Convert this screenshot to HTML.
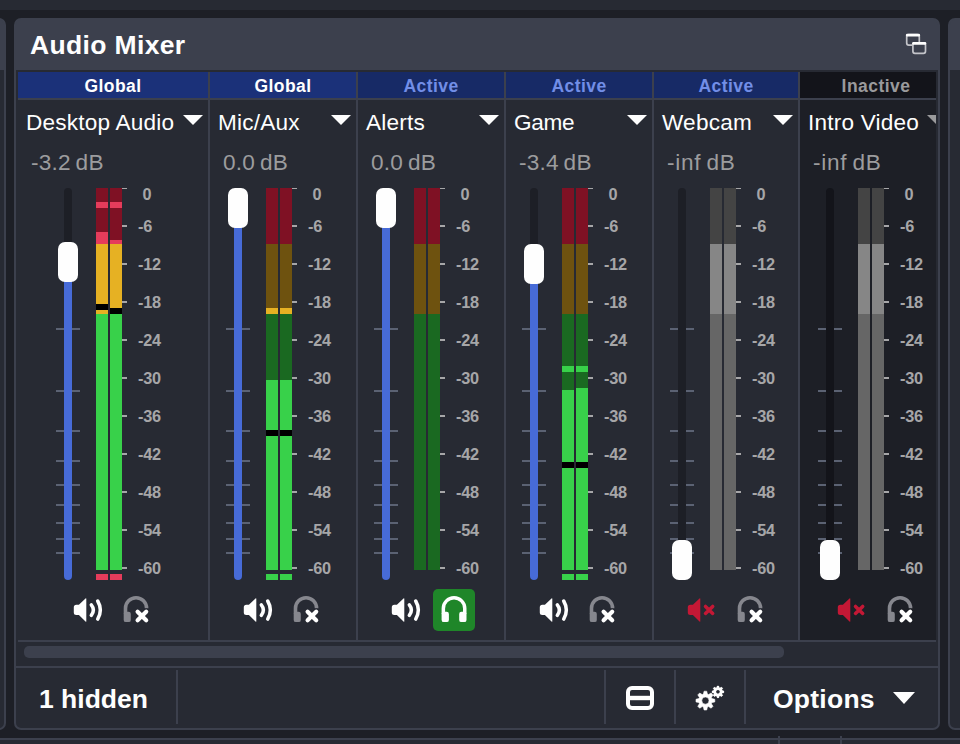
<!DOCTYPE html>
<html lang="en"><head><meta charset="utf-8"><title>Audio Mixer</title>
<style>
html,body{margin:0;padding:0}
body{width:960px;height:744px;overflow:hidden;background:#1d1f26;position:relative;font-family:"Liberation Sans",sans-serif;color:#fefefe}
.a{position:absolute}
.panel{position:absolute;box-sizing:border-box;border:2px solid #3c404d;border-radius:7px;background:linear-gradient(#3c404d 0,#3c404d 50px,#272a33 50px);overflow:hidden}
.tbar{position:absolute;left:0;top:0;right:0;height:50px;background:#3c404d}
.title{position:absolute;left:30px;top:28.75px;font-weight:bold;font-size:26.5px;line-height:32px;letter-spacing:.35px;white-space:nowrap}
.col{position:absolute;top:72px;height:568px;background:#272a33;overflow:hidden}
.col.in{background:#1d1f26}
.hd{position:absolute;left:0;right:0;top:0;height:26px;text-align:center;font-weight:bold;font-size:17.5px;line-height:28px;letter-spacing:.45px;overflow:hidden}
.hd.g{background:#1b3179;color:#fefefe}
.hd.ac{background:#172a66;color:#728eE7}
.hd.in{background:#13141a;color:#9a9a9c}
.hl{position:absolute;left:0;right:0;top:26px;height:2px;background:#3c404d}
.sep{position:absolute;top:72px;height:568px;width:2px;background:#3c404d}
.nm{position:absolute;left:8px;top:36.75px;font-size:22.6px;line-height:28px;white-space:nowrap;letter-spacing:.2px}
.db{position:absolute;left:13px;top:76.75px;font-size:22.6px;line-height:28px;white-space:nowrap;color:#9c9c9e;word-spacing:-1.6px;letter-spacing:.2px}
.tri{position:absolute;width:0;height:0;border-left:10.6px solid transparent;border-right:10.6px solid transparent;border-top:10.5px solid #fefefe}
.gr{position:absolute;top:116px;width:8px;height:392px;border-radius:4px;background:#1d1f26}
.in .gr{background:#13141a}
.fill{position:absolute;width:8px;border-radius:0 0 4px 4px;background:#476bd7}
.hn{position:absolute;width:20px;height:40px;border-radius:7px;background:#fefefe}
.st{position:absolute;width:24px;height:2px;background:#5b6273}
.m{position:absolute;width:12px}
.tk{position:absolute;width:5px;height:2px;background:#a6a6a8}
.lb{position:absolute;font-weight:bold;font-size:16.3px;letter-spacing:-.25px;line-height:20px;color:#a6a6a8;white-space:nowrap}
.hline{position:absolute;height:2px;background:#3c404d}
.vsep{position:absolute;top:670px;width:2px;height:54px;background:#3c404d}
.tb{position:absolute;font-weight:bold;font-size:26.5px;line-height:32px;white-space:nowrap}
.mon{position:absolute;width:42px;height:42px;border-radius:5px;background:#1f8629}
svg{position:absolute;overflow:visible}
</style></head>
<body>
<div class="a" style="left:0;top:0;width:960px;height:10px;background:#272a33"></div>
<div class="a" style="left:0;top:738px;width:960px;height:6px;background:#272a33;border-top:2px solid #3c404d;box-sizing:border-box"></div>
<div class="a" style="left:778px;top:736px;width:2px;height:8px;background:#3c404d"></div>
<div class="a" style="left:840px;top:736px;width:2px;height:8px;background:#3c404d"></div>
<div class="panel" style="left:-30px;top:18px;width:36px;height:712px"></div>
<div class="panel" style="left:948px;top:18px;width:40px;height:712px"></div>
<div class="panel" style="left:14px;top:18px;width:926px;height:712px"></div>
<div class="title">Audio Mixer</div>
<svg style="left:904px;top:32px" width="24" height="24" viewBox="0 0 24 24">
<rect x="2.7" y="2.7" width="12.6" height="10.4" rx="2" fill="none" stroke="#c3c4c9" stroke-width="1.7"/>
<rect x="1.9" y="1.8" width="14.2" height="2.8" rx="1.3" fill="#fefefe"/>
<rect x="8.9" y="10.9" width="12.6" height="10.4" rx="2" fill="#3c404d" stroke="#c3c4c9" stroke-width="1.7"/>
<rect x="8.1" y="10" width="14.2" height="2.8" rx="1.3" fill="#fefefe"/>
</svg>
<div class="col" style="left:18px;width:190px">
<div class="hd g">Global</div><div class="hl"></div>
<div class="nm">Desktop Audio</div>
<div class="tri" style="left:165.4px;top:42.8px"></div>
<div class="db">-3.2 dB</div>
<div class="gr" style="left:46px"></div>
<div class="st" style="left:38px;top:256px"></div>
<div class="st" style="left:38px;top:318px"></div>
<div class="st" style="left:38px;top:358px"></div>
<div class="st" style="left:38px;top:388px"></div>
<div class="st" style="left:38px;top:412px"></div>
<div class="st" style="left:38px;top:432px"></div>
<div class="st" style="left:38px;top:450px"></div>
<div class="st" style="left:38px;top:466px"></div>
<div class="st" style="left:38px;top:480px"></div>
<div class="a" style="left:46px;top:120px;width:8px;height:384px;background:#1d1f26"></div>
<div class="fill" style="left:46px;top:190px;height:318px"></div>
<div class="hn" style="left:40px;top:170px"></div>
<div class="m" style="left:78px;top:116px;height:56px;background:#7f1124"></div><div class="m" style="left:78px;top:172px;height:70px;background:#6e520f"></div><div class="m" style="left:78px;top:242px;height:256px;background:#1a6921"></div><div class="m" style="left:78px;top:242px;height:256px;background:#38d14a"></div>
<div class="m" style="left:92px;top:116px;height:56px;background:#7f1124"></div><div class="m" style="left:92px;top:172px;height:70px;background:#6e520f"></div><div class="m" style="left:92px;top:242px;height:256px;background:#1a6921"></div><div class="m" style="left:92px;top:242px;height:256px;background:#38d14a"></div>
<div class="m" style="left:78px;top:172px;height:70px;background:#e6b123"></div>
<div class="m" style="left:92px;top:172px;height:70px;background:#e6b123"></div>
<div class="m" style="left:78px;top:130px;height:6px;background:#e53c5b"></div>
<div class="m" style="left:92px;top:130px;height:6px;background:#e53c5b"></div>
<div class="m" style="left:78px;top:160px;height:12px;background:#e53c5b"></div>
<div class="m" style="left:92px;top:168px;height:4px;background:#e53c5b"></div>
<div class="m" style="left:78px;top:232px;height:6px;background:#000"></div>
<div class="m" style="left:92px;top:236px;height:6px;background:#000"></div>
<div class="m" style="left:78px;top:502px;height:6px;background:#e53c5b"></div>
<div class="m" style="left:92px;top:502px;height:6px;background:#e53c5b"></div>
<div class="tk" style="left:104px;top:116px;height:1.4px"></div>
<div class="lb" style="left:124.5px;top:112px">0</div>
<div class="tk" style="left:104px;top:153px"></div>
<div class="lb" style="left:120px;top:144px">-6</div>
<div class="tk" style="left:104px;top:191px"></div>
<div class="lb" style="left:120px;top:182px">-12</div>
<div class="tk" style="left:104px;top:229px"></div>
<div class="lb" style="left:120px;top:220px">-18</div>
<div class="tk" style="left:104px;top:267px"></div>
<div class="lb" style="left:120px;top:258px">-24</div>
<div class="tk" style="left:104px;top:305px"></div>
<div class="lb" style="left:120px;top:296px">-30</div>
<div class="tk" style="left:104px;top:343px"></div>
<div class="lb" style="left:120px;top:334px">-36</div>
<div class="tk" style="left:104px;top:381px"></div>
<div class="lb" style="left:120px;top:372px">-42</div>
<div class="tk" style="left:104px;top:419px"></div>
<div class="lb" style="left:120px;top:410px">-48</div>
<div class="tk" style="left:104px;top:457px"></div>
<div class="lb" style="left:120px;top:448px">-54</div>
<div class="tk" style="left:104px;top:495px"></div>
<div class="lb" style="left:120px;top:486px">-60</div>
<svg style="left:56px;top:526px" width="29" height="24" viewBox="0 0 29 24"><path d="M-0.2 9.2Q-0.2 6.7 2.3 6.7H4.9L11.5 0.4Q12.3 -0.3 12.3 0.8V23.2Q12.3 24.3 11.5 23.6L4.9 17.1H2.3Q-0.2 17.1 -0.2 14.6Z" fill="#fefefe"/><path d="M17.3 6.8Q21.5 12 17.3 17.3M23.7 3Q29 12 23.7 21.1" stroke="#fefefe" stroke-width="3.5" stroke-linecap="round" fill="none"/></svg>
<svg style="left:106px;top:524px" width="26" height="27" viewBox="0 0 26 27"><path d="M1.5 18V12.25A10.55 10.55 0 0 1 22.6 12.25" stroke="#86878e" stroke-width="3.6" fill="none"/><rect x="-0.3" y="15.8" width="7.1" height="10.3" rx="2.2" fill="#86878e"/><path d="M13.6 15.8l8.6 8.4M22.2 15.8l-8.6 8.4" stroke="#272a33" stroke-width="6.2" stroke-linecap="round" fill="none"/><path d="M13.6 15.8l8.6 8.4M22.2 15.8l-8.6 8.4" stroke="#fefefe" stroke-width="4.2" stroke-linecap="round" fill="none"/></svg>
</div>
<div class="col" style="left:210px;width:146px">
<div class="hd g">Global</div><div class="hl"></div>
<div class="nm">Mic/Aux</div>
<div class="tri" style="left:121.4px;top:42.8px"></div>
<div class="db">0.0 dB</div>
<div class="gr" style="left:24px"></div>
<div class="st" style="left:16px;top:256px"></div>
<div class="st" style="left:16px;top:318px"></div>
<div class="st" style="left:16px;top:358px"></div>
<div class="st" style="left:16px;top:388px"></div>
<div class="st" style="left:16px;top:412px"></div>
<div class="st" style="left:16px;top:432px"></div>
<div class="st" style="left:16px;top:450px"></div>
<div class="st" style="left:16px;top:466px"></div>
<div class="st" style="left:16px;top:480px"></div>
<div class="a" style="left:24px;top:120px;width:8px;height:384px;background:#1d1f26"></div>
<div class="fill" style="left:24px;top:136px;height:372px"></div>
<div class="hn" style="left:18px;top:116px"></div>
<div class="m" style="left:56px;top:116px;height:56px;background:#7f1124"></div><div class="m" style="left:56px;top:172px;height:70px;background:#6e520f"></div><div class="m" style="left:56px;top:242px;height:256px;background:#1a6921"></div><div class="m" style="left:56px;top:308px;height:190px;background:#38d14a"></div>
<div class="m" style="left:70px;top:116px;height:56px;background:#7f1124"></div><div class="m" style="left:70px;top:172px;height:70px;background:#6e520f"></div><div class="m" style="left:70px;top:242px;height:256px;background:#1a6921"></div><div class="m" style="left:70px;top:308px;height:190px;background:#38d14a"></div>
<div class="m" style="left:56px;top:236px;height:6px;background:#e6b123"></div>
<div class="m" style="left:70px;top:236px;height:6px;background:#e6b123"></div>
<div class="m" style="left:56px;top:358px;height:6px;background:#000"></div>
<div class="m" style="left:70px;top:358px;height:6px;background:#000"></div>
<div class="m" style="left:56px;top:502px;height:6px;background:#38d14a"></div>
<div class="m" style="left:70px;top:502px;height:6px;background:#38d14a"></div>
<div class="tk" style="left:82px;top:116px;height:1.4px"></div>
<div class="lb" style="left:102.5px;top:112px">0</div>
<div class="tk" style="left:82px;top:153px"></div>
<div class="lb" style="left:98px;top:144px">-6</div>
<div class="tk" style="left:82px;top:191px"></div>
<div class="lb" style="left:98px;top:182px">-12</div>
<div class="tk" style="left:82px;top:229px"></div>
<div class="lb" style="left:98px;top:220px">-18</div>
<div class="tk" style="left:82px;top:267px"></div>
<div class="lb" style="left:98px;top:258px">-24</div>
<div class="tk" style="left:82px;top:305px"></div>
<div class="lb" style="left:98px;top:296px">-30</div>
<div class="tk" style="left:82px;top:343px"></div>
<div class="lb" style="left:98px;top:334px">-36</div>
<div class="tk" style="left:82px;top:381px"></div>
<div class="lb" style="left:98px;top:372px">-42</div>
<div class="tk" style="left:82px;top:419px"></div>
<div class="lb" style="left:98px;top:410px">-48</div>
<div class="tk" style="left:82px;top:457px"></div>
<div class="lb" style="left:98px;top:448px">-54</div>
<div class="tk" style="left:82px;top:495px"></div>
<div class="lb" style="left:98px;top:486px">-60</div>
<svg style="left:34px;top:526px" width="29" height="24" viewBox="0 0 29 24"><path d="M-0.2 9.2Q-0.2 6.7 2.3 6.7H4.9L11.5 0.4Q12.3 -0.3 12.3 0.8V23.2Q12.3 24.3 11.5 23.6L4.9 17.1H2.3Q-0.2 17.1 -0.2 14.6Z" fill="#fefefe"/><path d="M17.3 6.8Q21.5 12 17.3 17.3M23.7 3Q29 12 23.7 21.1" stroke="#fefefe" stroke-width="3.5" stroke-linecap="round" fill="none"/></svg>
<svg style="left:84px;top:524px" width="26" height="27" viewBox="0 0 26 27"><path d="M1.5 18V12.25A10.55 10.55 0 0 1 22.6 12.25" stroke="#86878e" stroke-width="3.6" fill="none"/><rect x="-0.3" y="15.8" width="7.1" height="10.3" rx="2.2" fill="#86878e"/><path d="M13.6 15.8l8.6 8.4M22.2 15.8l-8.6 8.4" stroke="#272a33" stroke-width="6.2" stroke-linecap="round" fill="none"/><path d="M13.6 15.8l8.6 8.4M22.2 15.8l-8.6 8.4" stroke="#fefefe" stroke-width="4.2" stroke-linecap="round" fill="none"/></svg>
</div>
<div class="col" style="left:358px;width:146px">
<div class="hd ac">Active</div><div class="hl"></div>
<div class="nm">Alerts</div>
<div class="tri" style="left:121.4px;top:42.8px"></div>
<div class="db">0.0 dB</div>
<div class="gr" style="left:24px"></div>
<div class="st" style="left:16px;top:256px"></div>
<div class="st" style="left:16px;top:318px"></div>
<div class="st" style="left:16px;top:358px"></div>
<div class="st" style="left:16px;top:388px"></div>
<div class="st" style="left:16px;top:412px"></div>
<div class="st" style="left:16px;top:432px"></div>
<div class="st" style="left:16px;top:450px"></div>
<div class="st" style="left:16px;top:466px"></div>
<div class="st" style="left:16px;top:480px"></div>
<div class="a" style="left:24px;top:120px;width:8px;height:384px;background:#1d1f26"></div>
<div class="fill" style="left:24px;top:136px;height:372px"></div>
<div class="hn" style="left:18px;top:116px"></div>
<div class="m" style="left:56px;top:116px;height:56px;background:#7f1124"></div><div class="m" style="left:56px;top:172px;height:70px;background:#6e520f"></div><div class="m" style="left:56px;top:242px;height:256px;background:#1a6921"></div>
<div class="m" style="left:70px;top:116px;height:56px;background:#7f1124"></div><div class="m" style="left:70px;top:172px;height:70px;background:#6e520f"></div><div class="m" style="left:70px;top:242px;height:256px;background:#1a6921"></div>
<div class="tk" style="left:82px;top:116px;height:1.4px"></div>
<div class="lb" style="left:102.5px;top:112px">0</div>
<div class="tk" style="left:82px;top:153px"></div>
<div class="lb" style="left:98px;top:144px">-6</div>
<div class="tk" style="left:82px;top:191px"></div>
<div class="lb" style="left:98px;top:182px">-12</div>
<div class="tk" style="left:82px;top:229px"></div>
<div class="lb" style="left:98px;top:220px">-18</div>
<div class="tk" style="left:82px;top:267px"></div>
<div class="lb" style="left:98px;top:258px">-24</div>
<div class="tk" style="left:82px;top:305px"></div>
<div class="lb" style="left:98px;top:296px">-30</div>
<div class="tk" style="left:82px;top:343px"></div>
<div class="lb" style="left:98px;top:334px">-36</div>
<div class="tk" style="left:82px;top:381px"></div>
<div class="lb" style="left:98px;top:372px">-42</div>
<div class="tk" style="left:82px;top:419px"></div>
<div class="lb" style="left:98px;top:410px">-48</div>
<div class="tk" style="left:82px;top:457px"></div>
<div class="lb" style="left:98px;top:448px">-54</div>
<div class="tk" style="left:82px;top:495px"></div>
<div class="lb" style="left:98px;top:486px">-60</div>
<svg style="left:34px;top:526px" width="29" height="24" viewBox="0 0 29 24"><path d="M-0.2 9.2Q-0.2 6.7 2.3 6.7H4.9L11.5 0.4Q12.3 -0.3 12.3 0.8V23.2Q12.3 24.3 11.5 23.6L4.9 17.1H2.3Q-0.2 17.1 -0.2 14.6Z" fill="#fefefe"/><path d="M17.3 6.8Q21.5 12 17.3 17.3M23.7 3Q29 12 23.7 21.1" stroke="#fefefe" stroke-width="3.5" stroke-linecap="round" fill="none"/></svg>
<div class="mon" style="left:75px;top:517px"></div>
<svg style="left:84px;top:524px" width="25" height="27" viewBox="0 0 25 27"><path d="M1.35 18V12.45A10.7 10.7 0 0 1 22.75 12.45V18" stroke="#fefefe" stroke-width="3.5" fill="none"/><rect x="-0.4" y="15.8" width="7.3" height="10.3" rx="2.2" fill="#fefefe"/><rect x="17.2" y="15.8" width="7.3" height="10.3" rx="2.2" fill="#fefefe"/></svg>
</div>
<div class="col" style="left:506px;width:146px">
<div class="hd ac">Active</div><div class="hl"></div>
<div class="nm" style="letter-spacing:-.3px">Game</div>
<div class="tri" style="left:121.4px;top:42.8px"></div>
<div class="db">-3.4 dB</div>
<div class="gr" style="left:24px"></div>
<div class="st" style="left:16px;top:256px"></div>
<div class="st" style="left:16px;top:318px"></div>
<div class="st" style="left:16px;top:358px"></div>
<div class="st" style="left:16px;top:388px"></div>
<div class="st" style="left:16px;top:412px"></div>
<div class="st" style="left:16px;top:432px"></div>
<div class="st" style="left:16px;top:450px"></div>
<div class="st" style="left:16px;top:466px"></div>
<div class="st" style="left:16px;top:480px"></div>
<div class="a" style="left:24px;top:120px;width:8px;height:384px;background:#1d1f26"></div>
<div class="fill" style="left:24px;top:192px;height:316px"></div>
<div class="hn" style="left:18px;top:172px"></div>
<div class="m" style="left:56px;top:116px;height:56px;background:#7f1124"></div><div class="m" style="left:56px;top:172px;height:70px;background:#6e520f"></div><div class="m" style="left:56px;top:242px;height:256px;background:#1a6921"></div><div class="m" style="left:56px;top:318px;height:180px;background:#38d14a"></div>
<div class="m" style="left:70px;top:116px;height:56px;background:#7f1124"></div><div class="m" style="left:70px;top:172px;height:70px;background:#6e520f"></div><div class="m" style="left:70px;top:242px;height:256px;background:#1a6921"></div><div class="m" style="left:70px;top:316px;height:182px;background:#38d14a"></div>
<div class="m" style="left:56px;top:294px;height:6px;background:#38d14a"></div>
<div class="m" style="left:70px;top:294px;height:6px;background:#38d14a"></div>
<div class="m" style="left:56px;top:390px;height:6px;background:#000"></div>
<div class="m" style="left:70px;top:390px;height:6px;background:#000"></div>
<div class="m" style="left:56px;top:502px;height:6px;background:#38d14a"></div>
<div class="m" style="left:70px;top:502px;height:6px;background:#38d14a"></div>
<div class="tk" style="left:82px;top:116px;height:1.4px"></div>
<div class="lb" style="left:102.5px;top:112px">0</div>
<div class="tk" style="left:82px;top:153px"></div>
<div class="lb" style="left:98px;top:144px">-6</div>
<div class="tk" style="left:82px;top:191px"></div>
<div class="lb" style="left:98px;top:182px">-12</div>
<div class="tk" style="left:82px;top:229px"></div>
<div class="lb" style="left:98px;top:220px">-18</div>
<div class="tk" style="left:82px;top:267px"></div>
<div class="lb" style="left:98px;top:258px">-24</div>
<div class="tk" style="left:82px;top:305px"></div>
<div class="lb" style="left:98px;top:296px">-30</div>
<div class="tk" style="left:82px;top:343px"></div>
<div class="lb" style="left:98px;top:334px">-36</div>
<div class="tk" style="left:82px;top:381px"></div>
<div class="lb" style="left:98px;top:372px">-42</div>
<div class="tk" style="left:82px;top:419px"></div>
<div class="lb" style="left:98px;top:410px">-48</div>
<div class="tk" style="left:82px;top:457px"></div>
<div class="lb" style="left:98px;top:448px">-54</div>
<div class="tk" style="left:82px;top:495px"></div>
<div class="lb" style="left:98px;top:486px">-60</div>
<svg style="left:34px;top:526px" width="29" height="24" viewBox="0 0 29 24"><path d="M-0.2 9.2Q-0.2 6.7 2.3 6.7H4.9L11.5 0.4Q12.3 -0.3 12.3 0.8V23.2Q12.3 24.3 11.5 23.6L4.9 17.1H2.3Q-0.2 17.1 -0.2 14.6Z" fill="#fefefe"/><path d="M17.3 6.8Q21.5 12 17.3 17.3M23.7 3Q29 12 23.7 21.1" stroke="#fefefe" stroke-width="3.5" stroke-linecap="round" fill="none"/></svg>
<svg style="left:84px;top:524px" width="26" height="27" viewBox="0 0 26 27"><path d="M1.5 18V12.25A10.55 10.55 0 0 1 22.6 12.25" stroke="#86878e" stroke-width="3.6" fill="none"/><rect x="-0.3" y="15.8" width="7.1" height="10.3" rx="2.2" fill="#86878e"/><path d="M13.6 15.8l8.6 8.4M22.2 15.8l-8.6 8.4" stroke="#272a33" stroke-width="6.2" stroke-linecap="round" fill="none"/><path d="M13.6 15.8l8.6 8.4M22.2 15.8l-8.6 8.4" stroke="#fefefe" stroke-width="4.2" stroke-linecap="round" fill="none"/></svg>
</div>
<div class="col" style="left:654px;width:144px">
<div class="hd ac">Active</div><div class="hl"></div>
<div class="nm">Webcam</div>
<div class="tri" style="left:119.4px;top:42.8px"></div>
<div class="db" style="letter-spacing:.7px">-inf dB</div>
<div class="gr" style="left:24px"></div>
<div class="st" style="left:16px;top:256px"></div>
<div class="st" style="left:16px;top:318px"></div>
<div class="st" style="left:16px;top:358px"></div>
<div class="st" style="left:16px;top:388px"></div>
<div class="st" style="left:16px;top:412px"></div>
<div class="st" style="left:16px;top:432px"></div>
<div class="st" style="left:16px;top:450px"></div>
<div class="st" style="left:16px;top:466px"></div>
<div class="st" style="left:16px;top:480px"></div>
<div class="a" style="left:24px;top:120px;width:8px;height:384px;background:#1d1f26"></div>
<div class="hn" style="left:18px;top:468px"></div>
<div class="m" style="left:56px;top:116px;height:56px;background:#444444"></div><div class="m" style="left:56px;top:172px;height:70px;background:#868686"></div><div class="m" style="left:56px;top:242px;height:256px;background:#666666"></div>
<div class="m" style="left:70px;top:116px;height:56px;background:#444444"></div><div class="m" style="left:70px;top:172px;height:70px;background:#868686"></div><div class="m" style="left:70px;top:242px;height:256px;background:#666666"></div>
<div class="tk" style="left:82px;top:116px;height:1.4px"></div>
<div class="lb" style="left:102.5px;top:112px">0</div>
<div class="tk" style="left:82px;top:153px"></div>
<div class="lb" style="left:98px;top:144px">-6</div>
<div class="tk" style="left:82px;top:191px"></div>
<div class="lb" style="left:98px;top:182px">-12</div>
<div class="tk" style="left:82px;top:229px"></div>
<div class="lb" style="left:98px;top:220px">-18</div>
<div class="tk" style="left:82px;top:267px"></div>
<div class="lb" style="left:98px;top:258px">-24</div>
<div class="tk" style="left:82px;top:305px"></div>
<div class="lb" style="left:98px;top:296px">-30</div>
<div class="tk" style="left:82px;top:343px"></div>
<div class="lb" style="left:98px;top:334px">-36</div>
<div class="tk" style="left:82px;top:381px"></div>
<div class="lb" style="left:98px;top:372px">-42</div>
<div class="tk" style="left:82px;top:419px"></div>
<div class="lb" style="left:98px;top:410px">-48</div>
<div class="tk" style="left:82px;top:457px"></div>
<div class="lb" style="left:98px;top:448px">-54</div>
<div class="tk" style="left:82px;top:495px"></div>
<div class="lb" style="left:98px;top:486px">-60</div>
<svg style="left:34px;top:526px" width="29" height="24" viewBox="0 0 29 24"><path d="M-0.2 9.2Q-0.2 6.7 2.3 6.7H4.9L11.5 0.4Q12.3 -0.3 12.3 0.8V23.2Q12.3 24.3 11.5 23.6L4.9 17.1H2.3Q-0.2 17.1 -0.2 14.6Z" fill="#c41835"/><path d="M17.5 8.4l7.2 7M24.7 8.4l-7.2 7" stroke="#c41835" stroke-width="3.5" stroke-linecap="round" fill="none"/></svg>
<svg style="left:84px;top:524px" width="26" height="27" viewBox="0 0 26 27"><path d="M1.5 18V12.25A10.55 10.55 0 0 1 22.6 12.25" stroke="#86878e" stroke-width="3.6" fill="none"/><rect x="-0.3" y="15.8" width="7.1" height="10.3" rx="2.2" fill="#86878e"/><path d="M13.6 15.8l8.6 8.4M22.2 15.8l-8.6 8.4" stroke="#272a33" stroke-width="6.2" stroke-linecap="round" fill="none"/><path d="M13.6 15.8l8.6 8.4M22.2 15.8l-8.6 8.4" stroke="#fefefe" stroke-width="4.2" stroke-linecap="round" fill="none"/></svg>
</div>
<div class="col in" style="left:800px;width:136px">
<div class="hd in" style="right:auto;width:152px">Inactive</div><div class="hl"></div>
<div class="nm">Intro Video</div>
<div class="tri" style="left:127.4px;top:42.8px;border-top-color:#9a9a9c"></div>
<div class="db" style="letter-spacing:.7px">-inf dB</div>
<div class="gr" style="left:26px"></div>
<div class="st" style="left:18px;top:256px"></div>
<div class="st" style="left:18px;top:318px"></div>
<div class="st" style="left:18px;top:358px"></div>
<div class="st" style="left:18px;top:388px"></div>
<div class="st" style="left:18px;top:412px"></div>
<div class="st" style="left:18px;top:432px"></div>
<div class="st" style="left:18px;top:450px"></div>
<div class="st" style="left:18px;top:466px"></div>
<div class="st" style="left:18px;top:480px"></div>
<div class="a" style="left:26px;top:120px;width:8px;height:384px;background:#13141a"></div>
<div class="hn" style="left:20px;top:468px"></div>
<div class="m" style="left:58px;top:116px;height:56px;background:#444444"></div><div class="m" style="left:58px;top:172px;height:70px;background:#868686"></div><div class="m" style="left:58px;top:242px;height:256px;background:#666666"></div>
<div class="m" style="left:72px;top:116px;height:56px;background:#444444"></div><div class="m" style="left:72px;top:172px;height:70px;background:#868686"></div><div class="m" style="left:72px;top:242px;height:256px;background:#666666"></div>
<div class="tk" style="left:84px;top:116px;height:1.4px"></div>
<div class="lb" style="left:104.5px;top:112px">0</div>
<div class="tk" style="left:84px;top:153px"></div>
<div class="lb" style="left:100px;top:144px">-6</div>
<div class="tk" style="left:84px;top:191px"></div>
<div class="lb" style="left:100px;top:182px">-12</div>
<div class="tk" style="left:84px;top:229px"></div>
<div class="lb" style="left:100px;top:220px">-18</div>
<div class="tk" style="left:84px;top:267px"></div>
<div class="lb" style="left:100px;top:258px">-24</div>
<div class="tk" style="left:84px;top:305px"></div>
<div class="lb" style="left:100px;top:296px">-30</div>
<div class="tk" style="left:84px;top:343px"></div>
<div class="lb" style="left:100px;top:334px">-36</div>
<div class="tk" style="left:84px;top:381px"></div>
<div class="lb" style="left:100px;top:372px">-42</div>
<div class="tk" style="left:84px;top:419px"></div>
<div class="lb" style="left:100px;top:410px">-48</div>
<div class="tk" style="left:84px;top:457px"></div>
<div class="lb" style="left:100px;top:448px">-54</div>
<div class="tk" style="left:84px;top:495px"></div>
<div class="lb" style="left:100px;top:486px">-60</div>
<svg style="left:38px;top:526px" width="29" height="24" viewBox="0 0 29 24"><path d="M-0.2 9.2Q-0.2 6.7 2.3 6.7H4.9L11.5 0.4Q12.3 -0.3 12.3 0.8V23.2Q12.3 24.3 11.5 23.6L4.9 17.1H2.3Q-0.2 17.1 -0.2 14.6Z" fill="#c41835"/><path d="M17.5 8.4l7.2 7M24.7 8.4l-7.2 7" stroke="#c41835" stroke-width="3.5" stroke-linecap="round" fill="none"/></svg>
<svg style="left:88px;top:524px" width="26" height="27" viewBox="0 0 26 27"><path d="M1.5 18V12.25A10.55 10.55 0 0 1 22.6 12.25" stroke="#86878e" stroke-width="3.6" fill="none"/><rect x="-0.3" y="15.8" width="7.1" height="10.3" rx="2.2" fill="#86878e"/><path d="M13.6 15.8l8.6 8.4M22.2 15.8l-8.6 8.4" stroke="#1d1f26" stroke-width="6.2" stroke-linecap="round" fill="none"/><path d="M13.6 15.8l8.6 8.4M22.2 15.8l-8.6 8.4" stroke="#fefefe" stroke-width="4.2" stroke-linecap="round" fill="none"/></svg>
</div>
<div class="sep" style="left:208px"></div>
<div class="sep" style="left:356px"></div>
<div class="sep" style="left:504px"></div>
<div class="sep" style="left:652px"></div>
<div class="sep" style="left:798px"></div>
<div class="hline" style="left:18px;top:640px;width:918px"></div>
<div class="a" style="left:24px;top:646px;width:760px;height:12px;border-radius:5px;background:#3c404d"></div>
<div class="hline" style="left:16px;top:666px;width:922px"></div>
<div class="tb" style="left:39px;top:683px">1 hidden</div>
<div class="vsep" style="left:176px"></div>
<div class="vsep" style="left:604px"></div>
<div class="vsep" style="left:674px"></div>
<div class="vsep" style="left:744px"></div>
<div class="tb" style="left:773px;top:683px;letter-spacing:.25px">Options</div>
<div class="tri" style="left:893px;top:692px;border-left-width:11.5px;border-right-width:11.5px;border-top-width:12px"></div>
<svg style="left:624px;top:684px" width="32" height="28" viewBox="0 0 32 28">
<rect x="4" y="4" width="24" height="20" rx="4" fill="none" stroke="#fefefe" stroke-width="4"/>
<rect x="4" y="11.8" width="24" height="4.4" fill="#fefefe"/></svg>
<svg style="left:690px;top:680px" width="40" height="36" viewBox="0 0 40 36"><path d="M26.70 7.74L27.14 6.01L28.78 6.01L29.22 7.74L29.98 8.05L31.51 7.14L32.67 8.30L31.76 9.83L32.07 10.59L33.80 11.03L33.80 12.67L32.07 13.11L31.76 13.87L32.67 15.40L31.51 16.56L29.98 15.65L29.22 15.96L28.78 17.69L27.14 17.69L26.70 15.96L25.94 15.65L24.41 16.56L23.25 15.40L24.16 13.87L23.85 13.11L22.12 12.67L22.12 11.03L23.85 10.59L24.16 9.83L23.25 8.30L24.41 7.14L25.94 8.05ZM25.86 11.85a2.1 2.1 0 1 0 4.2 0a2.1 2.1 0 1 0 -4.2 0Z" fill="#fefefe" fill-rule="evenodd" stroke="#272a33" stroke-width="1.6" stroke-linejoin="round" paint-order="stroke"/><path d="M13.41 14.10L14.08 11.19L16.72 11.19L17.39 14.10L18.59 14.60L21.12 13.01L22.99 14.88L21.40 17.41L21.90 18.61L24.81 19.28L24.81 21.92L21.90 22.59L21.40 23.79L22.99 26.32L21.12 28.19L18.59 26.60L17.39 27.10L16.72 30.01L14.08 30.01L13.41 27.10L12.21 26.60L9.68 28.19L7.81 26.32L9.40 23.79L8.90 22.59L5.99 21.92L5.99 19.28L8.90 18.61L9.40 17.41L7.81 14.88L9.68 13.01L12.21 14.60ZM11.80 20.60a3.6 3.6 0 1 0 7.2 0a3.6 3.6 0 1 0 -7.2 0Z" fill="#fefefe" fill-rule="evenodd" stroke="#fefefe" stroke-width="0.6" stroke-linejoin="round"/><path d="M26.70 7.74L27.14 6.01L28.78 6.01L29.22 7.74L29.98 8.05L31.51 7.14L32.67 8.30L31.76 9.83L32.07 10.59L33.80 11.03L33.80 12.67L32.07 13.11L31.76 13.87L32.67 15.40L31.51 16.56L29.98 15.65L29.22 15.96L28.78 17.69L27.14 17.69L26.70 15.96L25.94 15.65L24.41 16.56L23.25 15.40L24.16 13.87L23.85 13.11L22.12 12.67L22.12 11.03L23.85 10.59L24.16 9.83L23.25 8.30L24.41 7.14L25.94 8.05ZM25.86 11.85a2.1 2.1 0 1 0 4.2 0a2.1 2.1 0 1 0 -4.2 0Z" fill="#fefefe" fill-rule="evenodd" stroke="#fefefe" stroke-width="0.4" stroke-linejoin="round"/></svg>
</body></html>
